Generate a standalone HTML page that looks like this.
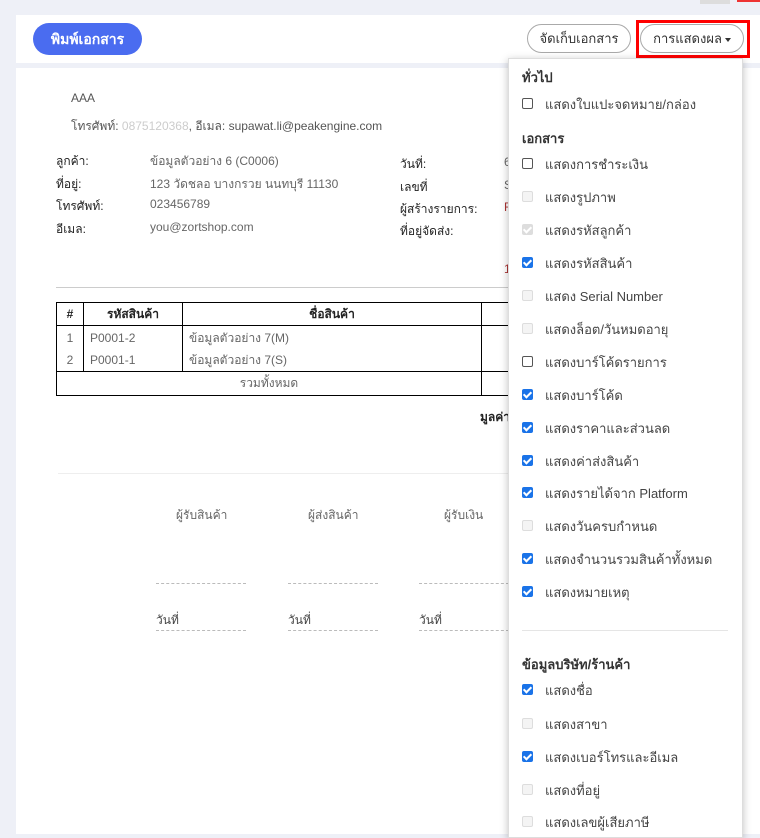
<!DOCTYPE html>
<html><head><meta charset="utf-8"><style>
*{margin:0;padding:0;box-sizing:border-box}
body{width:760px;height:834px;overflow:hidden;background:#eef0f7;font-family:"Liberation Sans","Noto Sans CJK SC",sans-serif;position:relative;color:#333}
.a{position:absolute;white-space:nowrap}
.top{position:absolute;left:16px;top:15px;width:744px;height:48px;background:#fff}
.doc{position:absolute;left:16px;top:68px;width:744px;height:766px;background:#fff}
.btn1{position:absolute;left:33px;top:23px;width:109px;height:32px;border-radius:16px;background:#4a6cf0;color:#fff;font-size:14px;font-weight:bold;text-align:center;line-height:32px}
.btn2{position:absolute;left:527px;top:24px;width:104px;height:29px;border:1px solid #aaa;border-radius:15px;font-size:13px;text-align:center;line-height:27px;color:#333;background:#fff}
.btn3{position:absolute;left:640px;top:24px;width:104px;height:29px;border:1px solid #aaa;border-radius:15px;font-size:13px;text-align:center;line-height:27px;color:#333;background:#fff}
.caret{display:inline-block;width:0;height:0;border-left:3px solid transparent;border-right:3px solid transparent;border-top:4px solid #333;vertical-align:middle;margin-left:3px}
.red{position:absolute;left:636px;top:20px;width:114px;height:38px;border:3px solid #f00}
.dd{position:absolute;left:508px;top:58px;width:235px;height:780px;background:#fff;box-shadow:0 2px 8px rgba(0,0,0,.25);border:1px solid #ddd}
.h{position:absolute;left:522px;font-size:13px;font-weight:bold;color:#333}
.it{position:absolute;left:545px;font-size:13px;color:#444;margin-top:-1px}
.cb{position:absolute;left:522px;width:11px;height:11px;border-radius:2px}
.e{border:1px solid #555;background:#fff}
.d{border:1px solid #ddd;background:#f4f4f4}
.c{background:#1a73e8}
.dc{background:#ddd}
.c::after,.dc::after{content:"";position:absolute;left:3px;top:1px;width:3px;height:6px;border:solid #fff;border-width:0 2px 2px 0;transform:rotate(45deg)}
.lbl{font-size:12px;color:#222}
.val{font-size:12px;color:#666}
table{position:absolute;left:56px;top:302px;width:460px;border-collapse:collapse;font-size:12px}
td{border:1px solid #000;padding:0 6px;color:#666}
.dash{position:absolute;height:0;border-top:1px dashed #bbb;width:90px}
</style></head><body>
<div class="a" style="left:700px;top:0;width:30px;height:4px;background:#ddd"></div>
<div class="a" style="left:737px;top:0;width:23px;height:2px;background:#e33"></div>
<div class="top"></div>
<div class="doc"></div>
<div class="btn1">พิมพ์เอกสาร</div>
<div class="btn2">จัดเก็บเอกสาร</div>
<div class="btn3">การแสดงผล<span class="caret"></span></div>
<div class="red"></div>

<div class="a" style="left:71px;top:91px;font-size:12px;color:#555">AAA</div>
<div class="a" style="left:71px;top:117px;font-size:12px;color:#555">โทรศัพท์: <span style="color:#ccc">0875120368</span>, อีเมล: supawat.li@peakengine.com</div>

<div class="a lbl" style="left:56px;top:152px">ลูกค้า:</div>
<div class="a lbl" style="left:56px;top:175px">ที่อยู่:</div>
<div class="a lbl" style="left:56px;top:197px">โทรศัพท์:</div>
<div class="a lbl" style="left:56px;top:220px">อีเมล:</div>
<div class="a val" style="left:150px;top:152px">ข้อมูลตัวอย่าง 6 (C0006)</div>
<div class="a val" style="left:150px;top:175px">123 วัดชลอ บางกรวย นนทบุรี 11130</div>
<div class="a val" style="left:150px;top:197px">023456789</div>
<div class="a val" style="left:150px;top:220px">you@zortshop.com</div>
<div class="a lbl" style="left:400px;top:155px">วันที่:</div>
<div class="a lbl" style="left:400px;top:178px">เลขที่</div>
<div class="a lbl" style="left:400px;top:200px">ผู้สร้างรายการ:</div>
<div class="a lbl" style="left:400px;top:222px">ที่อยู่จัดส่ง:</div>
<div class="a val" style="left:504px;top:155px">6</div>
<div class="a val" style="left:504px;top:178px">S</div>
<div class="a val" style="left:504px;top:200px;color:#a33">F</div>
<div class="a val" style="left:504px;top:262px;color:#a33">1</div>
<div class="a" style="left:56px;top:287px;width:452px;border-top:1px solid #ccc"></div>

<table>
<tr style="height:23px"><td style="width:27px;text-align:center;color:#222;font-weight:bold">#</td><td style="width:99px;text-align:center;color:#222;font-weight:bold">รหัสสินค้า</td><td style="width:299px;text-align:center;color:#222;font-weight:bold">ชื่อสินค้า</td><td></td></tr>
<tr style="height:46px"><td style="text-align:center;line-height:22px">1<br>2</td><td style="line-height:22px">P0001-2<br>P0001-1</td><td style="line-height:22px">ข้อมูลตัวอย่าง 7(M)<br>ข้อมูลตัวอย่าง 7(S)</td><td></td></tr>
<tr style="height:24px"><td colspan="3" style="text-align:center">รวมทั้งหมด</td><td></td></tr>
</table>
<div class="a lbl" style="left:480px;top:408px;font-weight:bold">มูลค่า</div>
<div class="a" style="left:58px;top:473px;width:450px;border-top:1px solid #eee"></div>
<div class="a val" style="left:176px;top:506px">ผู้รับสินค้า</div>
<div class="a val" style="left:308px;top:506px">ผู้ส่งสินค้า</div>
<div class="a val" style="left:444px;top:506px">ผู้รับเงิน</div>
<div class="dash" style="left:156px;top:583px"></div>
<div class="dash" style="left:288px;top:583px"></div>
<div class="dash" style="left:419px;top:583px"></div>
<div class="a val" style="left:156px;top:611px;color:#444">วันที่</div>
<div class="a val" style="left:288px;top:611px;color:#444">วันที่</div>
<div class="a val" style="left:419px;top:611px;color:#444">วันที่</div>
<div class="dash" style="left:156px;top:630px"></div>
<div class="dash" style="left:288px;top:630px"></div>
<div class="dash" style="left:419px;top:630px"></div>

<div class="dd"></div>
<div class="h" style="top:67px">ทั่วไป</div>
<div class="h" style="top:128px">เอกสาร</div>
<div class="a" style="left:522px;top:630px;width:206px;border-top:1px solid #e5e5e5"></div>
<div class="h" style="top:654px">ข้อมูลบริษัท/ร้านค้า</div>

<div class="cb e" style="top:98px"></div><div class="it" style="top:95px">แสดงใบแปะจดหมาย/กล่อง</div>
<div class="cb e" style="top:158px"></div><div class="it" style="top:155px">แสดงการชำระเงิน</div>
<div class="cb d" style="top:191px"></div><div class="it" style="top:188px">แสดงรูปภาพ</div>
<div class="cb dc" style="top:224px"></div><div class="it" style="top:221px">แสดงรหัสลูกค้า</div>
<div class="cb c" style="top:257px"></div><div class="it" style="top:254px">แสดงรหัสสินค้า</div>
<div class="cb d" style="top:290px"></div><div class="it" style="top:287px">แสดง Serial Number</div>
<div class="cb d" style="top:323px"></div><div class="it" style="top:320px">แสดงล็อต/วันหมดอายุ</div>
<div class="cb e" style="top:356px"></div><div class="it" style="top:353px">แสดงบาร์โค้ดรายการ</div>
<div class="cb c" style="top:389px"></div><div class="it" style="top:386px">แสดงบาร์โค้ด</div>
<div class="cb c" style="top:422px"></div><div class="it" style="top:419px">แสดงราคาและส่วนลด</div>
<div class="cb c" style="top:455px"></div><div class="it" style="top:452px">แสดงค่าส่งสินค้า</div>
<div class="cb c" style="top:487px"></div><div class="it" style="top:484px">แสดงรายได้จาก Platform</div>
<div class="cb d" style="top:520px"></div><div class="it" style="top:517px">แสดงวันครบกำหนด</div>
<div class="cb c" style="top:553px"></div><div class="it" style="top:550px">แสดงจำนวนรวมสินค้าทั้งหมด</div>
<div class="cb c" style="top:586px"></div><div class="it" style="top:583px">แสดงหมายเหตุ</div>
<div class="cb c" style="top:684px"></div><div class="it" style="top:681px">แสดงชื่อ</div>
<div class="cb d" style="top:718px"></div><div class="it" style="top:715px">แสดงสาขา</div>
<div class="cb c" style="top:751px"></div><div class="it" style="top:748px">แสดงเบอร์โทรและอีเมล</div>
<div class="cb d" style="top:784px"></div><div class="it" style="top:781px">แสดงที่อยู่</div>
<div class="cb d" style="top:816px"></div><div class="it" style="top:813px">แสดงเลขผู้เสียภาษี</div>
</body></html>
